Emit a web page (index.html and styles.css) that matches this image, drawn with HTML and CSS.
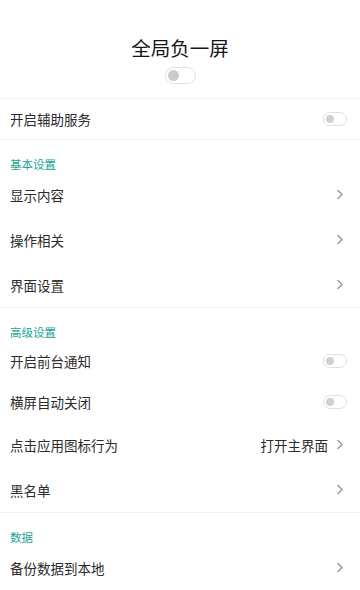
FILE: index.html
```html
<!DOCTYPE html>
<html lang="zh-CN">
<head>
<meta charset="utf-8">
<link rel="stylesheet" href="styles.css">
</head>
<body>
<div class="page">
  <header class="header">
    <div class="title">全局负一屏</div>
    <span class="switch switch-lg"><span class="knob"></span></span>
  </header>

  <div class="row row-toggle first">
    <span class="label">开启辅助服务</span>
    <span class="switch"><span class="knob"></span></span>
  </div>

  <section class="section">
    <div class="sec-title">基本设置</div>
    <div class="row row-nav"><span class="label">显示内容</span><svg class="chev" viewBox="0 0 6 10"><path d="M1 1 L5 5 L1 9"/></svg></div>
    <div class="row row-nav"><span class="label">操作相关</span><svg class="chev" viewBox="0 0 6 10"><path d="M1 1 L5 5 L1 9"/></svg></div>
    <div class="row row-nav"><span class="label">界面设置</span><svg class="chev" viewBox="0 0 6 10"><path d="M1 1 L5 5 L1 9"/></svg></div>
  </section>

  <section class="section">
    <div class="sec-title">高级设置</div>
    <div class="row row-toggle"><span class="label">开启前台通知</span><span class="switch"><span class="knob"></span></span></div>
    <div class="row row-toggle"><span class="label">横屏自动关闭</span><span class="switch"><span class="knob"></span></span></div>
    <div class="row row-nav"><span class="label">点击应用图标行为</span><span class="value">打开主界面</span><svg class="chev" viewBox="0 0 6 10"><path d="M1 1 L5 5 L1 9"/></svg></div>
    <div class="row row-nav"><span class="label">黑名单</span><svg class="chev" viewBox="0 0 6 10"><path d="M1 1 L5 5 L1 9"/></svg></div>
  </section>

  <section class="section last">
    <div class="sec-title">数据</div>
    <div class="row row-nav"><span class="label">备份数据到本地</span><svg class="chev" viewBox="0 0 6 10"><path d="M1 1 L5 5 L1 9"/></svg></div>
  </section>
</div>
</body>
</html>
```

FILE: styles.css
```css
* { box-sizing: border-box; }
html, body { margin: 0; padding: 0; background: #fff; }
body {
  font-family: "Noto Sans CJK SC", "Noto Sans", sans-serif;
  color: #2b2b2b;
  width: 360px;
  height: 590px;
  overflow: hidden;
}
.page { display: flex; flex-direction: column; }

.header {
  height: 99px;
  padding-top: 36px;
  border-bottom: 1px solid #f1f1f1;
  display: flex;
  flex-direction: column;
  align-items: center;
}
.title {
  font-size: 19.5px;
  line-height: 24px;
  color: #151515;
}

.switch {
  width: 24px;
  height: 14px;
  border: 1.5px solid #e0e0e0;
  border-radius: 7px;
  background: #fff;
  display: flex;
  align-items: center;
  padding-left: 2px;
  flex: none;
}
.switch .knob {
  width: 8px;
  height: 8px;
  border-radius: 50%;
  background: #d0d0d0;
}
.switch-lg {
  margin-top: 7px;
  width: 31px;
  height: 17px;
  border-radius: 9px;
  padding-left: 2.5px;
}
.switch-lg .knob { width: 11px; height: 11px; background: #cbcbcb; }

.row {
  display: flex;
  align-items: center;
  padding: 0 13px 0 10px;
  font-size: 13.5px;
}
.row-toggle { height: 41px; }
.row-nav { height: 45px; padding-right: 17px; }
.row.first { border-bottom: 1px solid #f1f1f1; }
.label { flex: 1; color: #2b2b2b; }
.value { color: #2b2b2b; margin-right: 9px; }
.chev {
  width: 6px;
  height: 11px;
  flex: none;
}
.chev path {
  fill: none;
  stroke: #999;
  stroke-width: 1.5;
  stroke-linecap: round;
  stroke-linejoin: round;
}

.section { border-bottom: 1px solid #f1f1f1; }
.section.last { border-bottom: none; }
.sec-title {
  padding: 17px 10px 1px;
  font-size: 11.5px;
  line-height: 14px;
  color: #22a393;
}
```
